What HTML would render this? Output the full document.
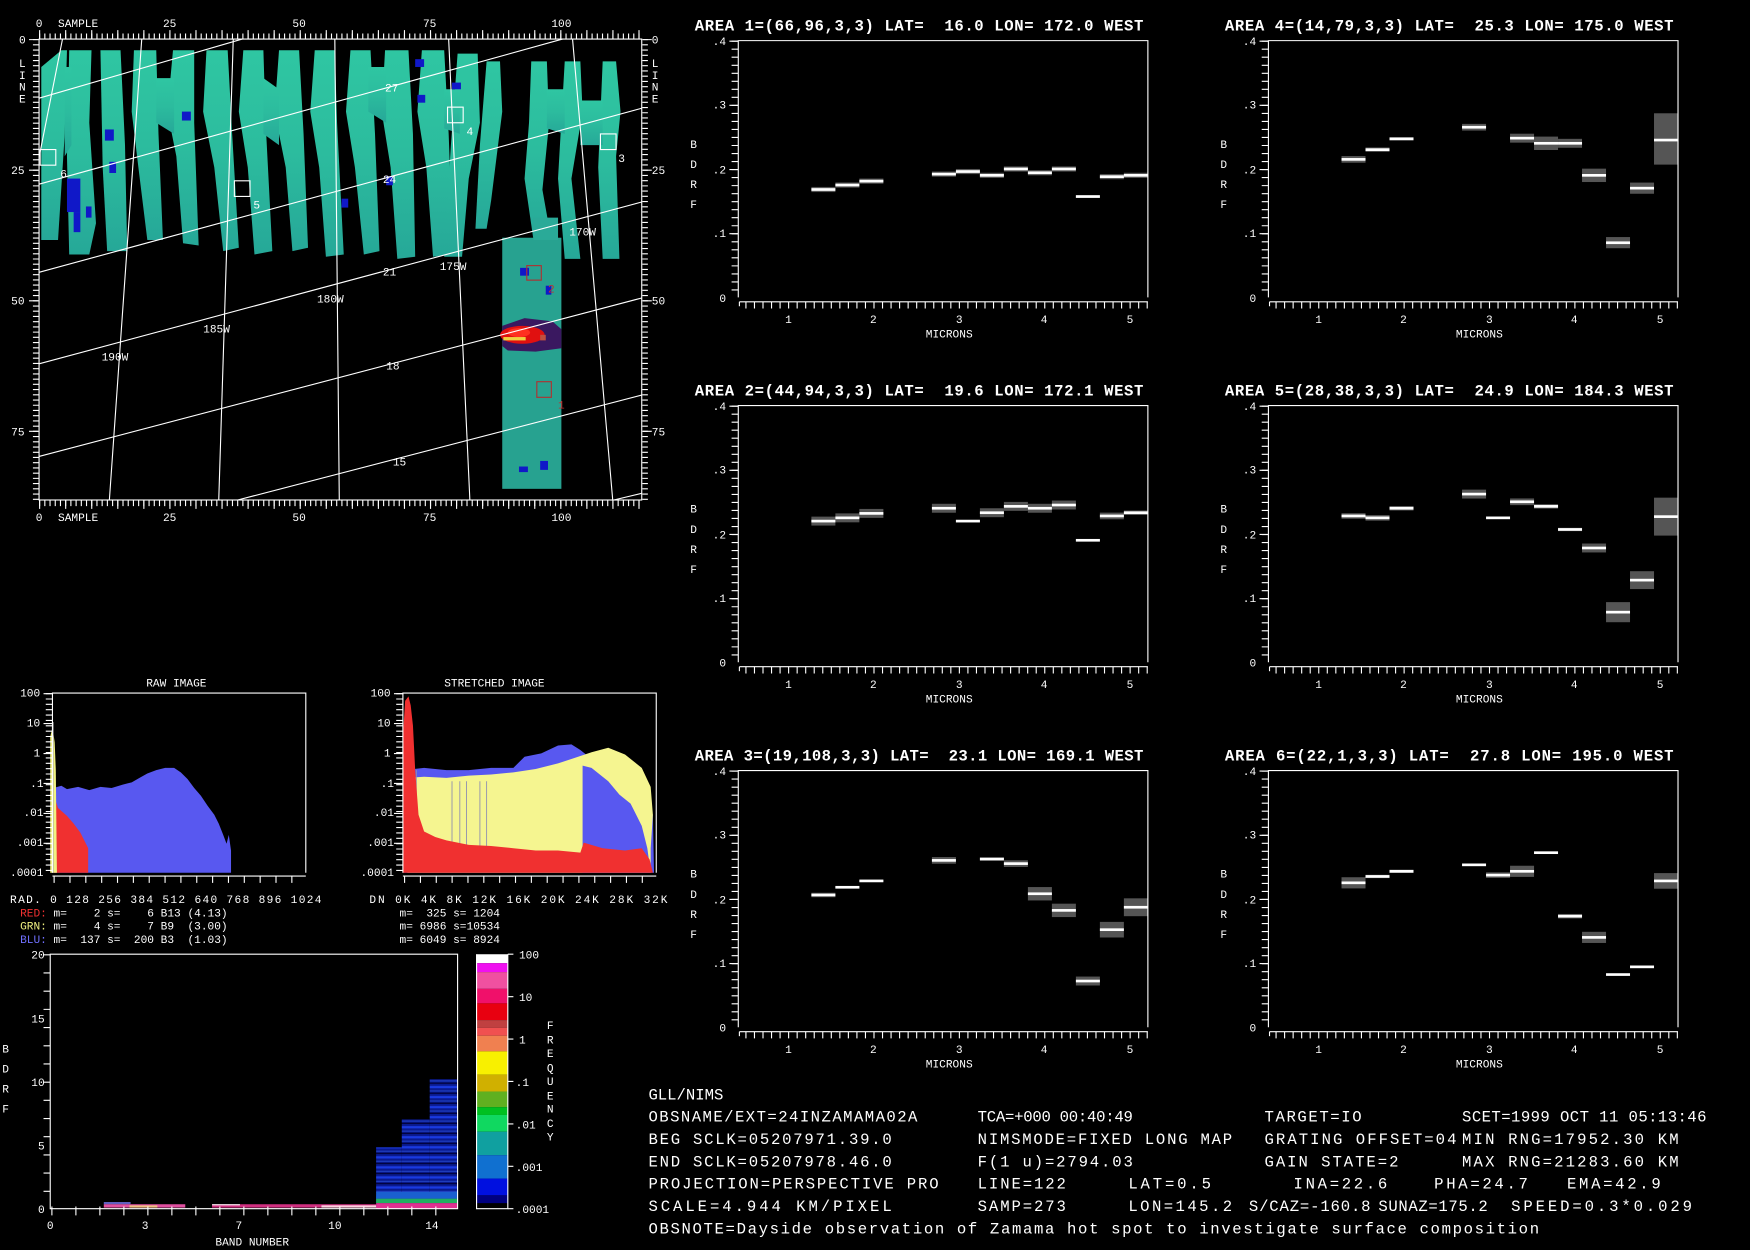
<!DOCTYPE html>
<html><head><meta charset="utf-8"><style>
html,body{margin:0;padding:0;background:#000;overflow:hidden}
svg{display:block}
text{font-family:"Liberation Mono",monospace;fill:#fff}
</style></head><body>
<svg width="1750" height="1250" viewBox="0 0 1568 1120" preserveAspectRatio="none" xmlns="http://www.w3.org/2000/svg">
<rect width="1568" height="1120" fill="#000"/>
<defs>
<linearGradient id="tg" x1="0" y1="0" x2="0" y2="1"><stop offset="0" stop-color="#2fc6a2"/><stop offset="0.5" stop-color="#2cbc9e"/><stop offset="1" stop-color="#26a898"/></linearGradient>
<pattern id="bl" width="20" height="9" patternUnits="userSpaceOnUse"><rect width="20" height="9" fill="#0a1a90"/><rect y="1" width="20" height="2" fill="#1a3ae0"/><rect y="5" width="20" height="1" fill="#2040c0"/><rect y="7" width="20" height="1" fill="#000030"/></pattern>
<g id="lt"><path d="M-3 0V230" stroke="#fff" stroke-width="6" stroke-dasharray="1 6.19"/><path d="M-4 0V230" stroke="#fff" stroke-width="8" stroke-dasharray="1 56.5"/></g>
<g id="frame">
<path d="M0 230V0H367V230" stroke="#fff" fill="none"/>
<use href="#lt"/>
<path d="M1 234H367" stroke="#fff"/>
<path d="M6.35 237H367" stroke="#fff" stroke-width="6" stroke-dasharray="1 6.65"/>
<path d="M1 238V234" stroke="#fff"/>
<g font-size="10">
<text x="-23" y="4">.4</text><text x="-23" y="61">.3</text><text x="-23" y="119">.2</text><text x="-23" y="176">.1</text><text x="-17" y="234">0</text>
<text x="-43" y="96">B</text><text x="-43" y="114">D</text><text x="-43" y="132">R</text><text x="-43" y="150">F</text>
<text x="42" y="253">1</text><text x="118" y="253">2</text><text x="195" y="253">3</text><text x="271" y="253">4</text><text x="348" y="253">5</text>
<text x="168" y="266">MICRONS</text>
</g>
</g>
</defs>

<!-- ============ MAP ============ -->
<g>
<g fill="url(#tg)">
<polygon points="37,60 55,45 60,45 58,120 52,215 37,215"/>
<polygon points="62,45 82,45 80,110 86,200 80,228 62,228 60,140"/>
<polygon points="90,45 108,45 112,130 114,225 96,225 92,150"/>
<polygon points="120,45 140,45 142,120 146,215 132,215 124,150 118,100"/>
<polygon points="155,45 174,45 174,110 178,220 164,218 158,140 150,100"/>
<polygon points="185,45 204,45 208,120 214,222 200,225 192,150 182,100"/>
<polygon points="218,45 236,45 238,110 244,225 228,228 222,150 214,100"/>
<polygon points="250,45 268,45 272,120 276,222 262,225 256,150 246,100"/>
<polygon points="282,45 300,45 302,110 308,228 292,230 286,150 278,100"/>
<polygon points="314,45 332,45 336,120 340,225 326,228 318,150 310,100"/>
<polygon points="345,45 366,45 370,120 372,230 356,232 350,150 342,100"/>
<polygon points="378,45 398,45 402,120 406,228 388,230 382,150 374,100"/>
<polygon points="410,48 428,48 430,110 420,160 414,230 398,230 404,130"/>
<polygon points="436,55 448,55 450,100 440,180 436,205 426,205 430,130"/>
<polygon points="476,55 490,55 492,110 486,170 494,215 478,215 470,160 474,110"/>
<polygon points="506,55 520,55 522,100 512,160 520,232 506,232 500,160"/>
<polygon points="540,55 552,55 556,100 552,140 555,232 540,232 536,150"/>
<polygon points="58,60 64,60 64,130 58,140"/><polygon points="140,70 156,70 156,120 140,110"/>
<polygon points="236,70 250,80 250,130 236,120"/><polygon points="330,60 346,60 346,110 330,100"/>
<polygon points="398,80 412,80 412,120 398,115"/><polygon points="490,80 506,80 506,120 490,115"/>
<polygon points="520,90 540,90 540,130 520,130"/>
</g>
<rect x="450" y="213" width="53" height="225" fill="#27a290"/>
<rect x="478" y="195" width="22" height="20" fill="#2aaa98"/>
<polygon points="450,292 470,285 495,288 503,295 503,312 480,315 455,314 450,310" fill="#3a1860"/>
<ellipse cx="468" cy="300" rx="20" ry="8" fill="#e01010"/>
<ellipse cx="465" cy="298" rx="10" ry="4" fill="#ff3020"/>
<rect x="451" y="302" width="20" height="3" fill="#f0d040"/>
<rect x="484" y="300" width="5" height="5" fill="#c05040"/>
<g fill="#1018c8">
<rect x="94" y="116" width="8" height="10"/><rect x="60" y="160" width="12" height="30"/><rect x="66" y="190" width="6" height="18"/>
<rect x="98" y="145" width="6" height="10"/><rect x="163" y="100" width="8" height="8"/><rect x="372" y="53" width="8" height="7"/>
<rect x="374" y="85" width="7" height="7"/><rect x="405" y="74" width="8" height="6"/><rect x="306" y="178" width="6" height="8"/>
<rect x="346" y="158" width="6" height="8"/><rect x="466" y="240" width="8" height="7"/><rect x="489" y="256" width="5" height="8"/>
<rect x="465" y="418" width="8" height="5"/><rect x="484" y="413" width="7" height="8"/><rect x="77" y="185" width="5" height="10"/>
</g>
<g stroke="#fff" stroke-width="1" fill="none">
<path d="M35 88L217 35M35 165L504 35M35 244L575 97M35 326L575 181M35 409L575 267M213 448L575 354M550 448L575 442"/>
<path d="M56 35L35 141M127 35L98 448M209 35L196 448M300 35L304 448M402 35L421 448M513 35L549 448"/>
<rect x="35" y="35" width="540" height="413"/>
<rect x="401" y="96" width="14" height="14"/><rect x="538" y="120" width="14" height="14"/>
<rect x="36" y="134" width="14" height="14"/><rect x="210" y="162" width="14" height="14"/>
</g>
<g stroke="#b03030" stroke-width="1" fill="none"><rect x="472" y="238" width="13" height="13"/><rect x="481" y="342" width="13" height="14"/></g>
<g font-size="10">
<text x="345" y="82">27</text><text x="343" y="164">24</text><text x="343" y="247">21</text><text x="346" y="331">18</text><text x="352" y="417">15</text>
<text x="510" y="211">170W</text><text x="394" y="242">175W</text><text x="284" y="271">180W</text><text x="182" y="298">185W</text><text x="91" y="323">190W</text>
<text x="418" y="121">4</text><text x="554" y="145">3</text><text x="54" y="159">6</text><text x="227" y="187">5</text>
<text x="491" y="262" style="fill:#c03030">2</text><text x="500" y="366" style="fill:#c03030">1</text>
</g>
<g stroke="#fff" fill="none">
<path d="M35 32.5H575" stroke-width="5" stroke-dasharray="1 3.67"/>
<path d="M35 31H575" stroke-width="8" stroke-dasharray="1 22.35"/>
<path d="M35 451H575" stroke-width="5" stroke-dasharray="1 3.67"/>
<path d="M35 452H575" stroke-width="8" stroke-dasharray="1 22.35"/>
<path d="M32 35V448" stroke-width="5" stroke-dasharray="1 3.68"/>
<path d="M578 35V448" stroke-width="5" stroke-dasharray="1 3.68"/>
<path d="M30 35V448" stroke-width="8" stroke-dasharray="1 116"/>
<path d="M580 35V448" stroke-width="8" stroke-dasharray="1 116"/>
</g>
<g font-size="10">
<text x="32" y="24">0</text><text x="52" y="24">SAMPLE</text><text x="146" y="24">25</text><text x="262" y="24">50</text><text x="379" y="24">75</text><text x="494" y="24">100</text>
<text x="32" y="467">0</text><text x="52" y="467">SAMPLE</text><text x="146" y="467">25</text><text x="262" y="467">50</text><text x="379" y="467">75</text><text x="494" y="467">100</text>
<text x="17" y="39">0</text><text x="10" y="156">25</text><text x="10" y="273">50</text><text x="10" y="390">75</text>
<text x="584" y="39">0</text><text x="584" y="156">25</text><text x="584" y="273">50</text><text x="584" y="390">75</text>
<text x="17" y="60">L</text><text x="17" y="71">I</text><text x="17" y="81">N</text><text x="17" y="92">E</text>
<text x="584" y="60">L</text><text x="584" y="71">I</text><text x="584" y="81">N</text><text x="584" y="92">E</text>
</g>
</g>

<!-- ============ AREA PLOTS ============ -->
<g font-size="10">
<g transform="translate(661.5,36.4)">
<text x="-39" y="-9" font-size="14" font-weight="bold" textLength="402" xml:space="preserve">AREA 1=(66,96,3,3) LAT=  16.0 LON= 172.0 WEST</text>
<g fill="#555"><rect x="65.5" y="131.1" width="21.5" height="4.6"/><rect x="87" y="127.1" width="21.5" height="4.6"/><rect x="108.5" y="123.6" width="21.5" height="4.6"/><rect x="173.5" y="117.3" width="21.5" height="4.6"/><rect x="195" y="115" width="21.5" height="4.6"/><rect x="216.5" y="118.4" width="21.5" height="4.6"/><rect x="238" y="112.7" width="21.5" height="4.6"/><rect x="259.5" y="116.1" width="21.5" height="4.6"/><rect x="281" y="112.7" width="21.5" height="4.6"/><rect x="302.5" y="138.5" width="21.5" height="2.4"/><rect x="324" y="119.6" width="21.5" height="4.6"/><rect x="345.5" y="118.4" width="21.5" height="4.6"/></g>
<g fill="#fff"><rect x="65.5" y="132.2" width="21.5" height="2.4"/><rect x="87" y="128.2" width="21.5" height="2.4"/><rect x="108.5" y="124.7" width="21.5" height="2.4"/><rect x="173.5" y="118.4" width="21.5" height="2.4"/><rect x="195" y="116.1" width="21.5" height="2.4"/><rect x="216.5" y="119.5" width="21.5" height="2.4"/><rect x="238" y="113.8" width="21.5" height="2.4"/><rect x="259.5" y="117.2" width="21.5" height="2.4"/><rect x="281" y="113.8" width="21.5" height="2.4"/><rect x="302.5" y="138.5" width="21.5" height="2.4"/><rect x="324" y="120.7" width="21.5" height="2.4"/><rect x="345.5" y="119.5" width="21.5" height="2.4"/></g>
</g>
<g transform="translate(1136.5,36.4)">
<text x="-39" y="-9" font-size="14" font-weight="bold" textLength="402" xml:space="preserve">AREA 4=(14,79,3,3) LAT=  25.3 LON= 175.0 WEST</text>
<g fill="#555"><rect x="65.5" y="103.4" width="21.5" height="6"/><rect x="87" y="95.7" width="21.5" height="4"/><rect x="108.5" y="86.5" width="21.5" height="3"/><rect x="173.5" y="74.6" width="21.5" height="6"/><rect x="216.5" y="83.4" width="21.5" height="8"/><rect x="238" y="86" width="21.5" height="12"/><rect x="259.5" y="88" width="21.5" height="8"/><rect x="281" y="114.7" width="21.5" height="12"/><rect x="302.5" y="176" width="21.5" height="10"/><rect x="324" y="127.2" width="21.5" height="10"/><rect x="345.5" y="65.1" width="21.5" height="46"/></g>
<g fill="#fff"><rect x="65.5" y="105.2" width="21.5" height="2.4"/><rect x="87" y="96.5" width="21.5" height="2.4"/><rect x="108.5" y="86.8" width="21.5" height="2.4"/><rect x="173.5" y="76.4" width="21.5" height="2.4"/><rect x="216.5" y="86.2" width="21.5" height="2.4"/><rect x="238" y="90.8" width="21.5" height="2.4"/><rect x="259.5" y="90.8" width="21.5" height="2.4"/><rect x="281" y="119.5" width="21.5" height="2.4"/><rect x="302.5" y="179.9" width="21.5" height="2.4"/><rect x="324" y="131" width="21.5" height="2.4"/><rect x="345.5" y="87.9" width="21.5" height="2.4"/></g>
</g>
<g transform="translate(661.5,363.4)">
<text x="-39" y="-9" font-size="14" font-weight="bold" textLength="402" xml:space="preserve">AREA 2=(44,94,3,3) LAT=  19.6 LON= 172.1 WEST</text>
<g fill="#555"><rect x="65.5" y="99.5" width="21.5" height="8"/><rect x="87" y="96.6" width="21.5" height="8"/><rect x="108.5" y="92.6" width="21.5" height="8"/><rect x="173.5" y="88" width="21.5" height="8"/><rect x="195" y="102.5" width="21.5" height="2"/><rect x="216.5" y="92" width="21.5" height="8"/><rect x="238" y="86.3" width="21.5" height="8"/><rect x="259.5" y="88" width="21.5" height="8"/><rect x="281" y="85.1" width="21.5" height="8"/><rect x="302.5" y="119.7" width="21.5" height="2"/><rect x="324" y="95.9" width="21.5" height="6"/><rect x="345.5" y="94" width="21.5" height="4"/></g>
<g fill="#fff"><rect x="65.5" y="102.3" width="21.5" height="2.4"/><rect x="87" y="99.4" width="21.5" height="2.4"/><rect x="108.5" y="95.4" width="21.5" height="2.4"/><rect x="173.5" y="90.8" width="21.5" height="2.4"/><rect x="195" y="102.3" width="21.5" height="2.4"/><rect x="216.5" y="94.8" width="21.5" height="2.4"/><rect x="238" y="89.1" width="21.5" height="2.4"/><rect x="259.5" y="90.8" width="21.5" height="2.4"/><rect x="281" y="87.9" width="21.5" height="2.4"/><rect x="302.5" y="119.5" width="21.5" height="2.4"/><rect x="324" y="97.7" width="21.5" height="2.4"/><rect x="345.5" y="94.8" width="21.5" height="2.4"/></g>
</g>
<g transform="translate(1136.5,363.4)">
<text x="-39" y="-9" font-size="14" font-weight="bold" textLength="402" xml:space="preserve">AREA 5=(28,38,3,3) LAT=  24.9 LON= 184.3 WEST</text>
<g fill="#555"><rect x="65.5" y="96.4" width="21.5" height="5"/><rect x="87" y="98.1" width="21.5" height="5"/><rect x="108.5" y="90" width="21.5" height="4"/><rect x="173.5" y="75.3" width="21.5" height="8"/><rect x="216.5" y="83.2" width="21.5" height="6"/><rect x="238" y="88.3" width="21.5" height="4"/><rect x="259.5" y="109.5" width="21.5" height="3"/><rect x="281" y="123.6" width="21.5" height="8"/><rect x="302.5" y="176.1" width="21.5" height="18"/><rect x="324" y="148.4" width="21.5" height="16"/><rect x="345.5" y="82.5" width="21.5" height="34"/></g>
<g fill="#fff"><rect x="65.5" y="97.7" width="21.5" height="2.4"/><rect x="87" y="99.4" width="21.5" height="2.4"/><rect x="108.5" y="90.8" width="21.5" height="2.4"/><rect x="173.5" y="78.1" width="21.5" height="2.4"/><rect x="195" y="99.4" width="21.5" height="2.4"/><rect x="216.5" y="85" width="21.5" height="2.4"/><rect x="238" y="89.1" width="21.5" height="2.4"/><rect x="259.5" y="109.8" width="21.5" height="2.4"/><rect x="281" y="126.4" width="21.5" height="2.4"/><rect x="302.5" y="183.9" width="21.5" height="2.4"/><rect x="324" y="155.2" width="21.5" height="2.4"/><rect x="345.5" y="98.3" width="21.5" height="2.4"/></g>
</g>
<g transform="translate(661.5,690.4)">
<text x="-39" y="-9" font-size="14" font-weight="bold" textLength="402" xml:space="preserve">AREA 3=(19,108,3,3) LAT=  23.1 LON= 169.1 WEST</text>
<g fill="#555"><rect x="65.5" y="109.5" width="21.5" height="4"/><rect x="87" y="103.6" width="21.5" height="2"/><rect x="108.5" y="97.9" width="21.5" height="2"/><rect x="173.5" y="77.5" width="21.5" height="6"/><rect x="216.5" y="77.8" width="21.5" height="3"/><rect x="238" y="80.4" width="21.5" height="6"/><rect x="259.5" y="104.4" width="21.5" height="12"/><rect x="281" y="119.3" width="21.5" height="12"/><rect x="302.5" y="184.6" width="21.5" height="8"/><rect x="324" y="135.6" width="21.5" height="14"/><rect x="345.5" y="114.5" width="21.5" height="16"/></g>
<g fill="#fff"><rect x="65.5" y="110.3" width="21.5" height="2.4"/><rect x="87" y="103.4" width="21.5" height="2.4"/><rect x="108.5" y="97.7" width="21.5" height="2.4"/><rect x="173.5" y="79.3" width="21.5" height="2.4"/><rect x="216.5" y="78.1" width="21.5" height="2.4"/><rect x="238" y="82.2" width="21.5" height="2.4"/><rect x="259.5" y="109.2" width="21.5" height="2.4"/><rect x="281" y="124.1" width="21.5" height="2.4"/><rect x="302.5" y="187.4" width="21.5" height="2.4"/><rect x="324" y="141.4" width="21.5" height="2.4"/><rect x="345.5" y="121.3" width="21.5" height="2.4"/></g>
</g>
<g transform="translate(1136.5,690.4)">
<text x="-39" y="-9" font-size="14" font-weight="bold" textLength="402" xml:space="preserve">AREA 6=(22,1,3,3) LAT=  27.8 LON= 195.0 WEST</text>
<g fill="#555"><rect x="65.5" y="95.6" width="21.5" height="10"/><rect x="87" y="93.4" width="21.5" height="3"/><rect x="108.5" y="88.8" width="21.5" height="3"/><rect x="195" y="91.2" width="21.5" height="5"/><rect x="216.5" y="85.3" width="21.5" height="10"/><rect x="259.5" y="128.5" width="21.5" height="4"/><rect x="281" y="144.5" width="21.5" height="10"/><rect x="345.5" y="91.9" width="21.5" height="14"/></g>
<g fill="#fff"><rect x="65.5" y="99.4" width="21.5" height="2.4"/><rect x="87" y="93.7" width="21.5" height="2.4"/><rect x="108.5" y="89.1" width="21.5" height="2.4"/><rect x="173.5" y="83.3" width="21.5" height="2.4"/><rect x="195" y="92.5" width="21.5" height="2.4"/><rect x="216.5" y="89.1" width="21.5" height="2.4"/><rect x="238" y="72.4" width="21.5" height="2.4"/><rect x="259.5" y="129.3" width="21.5" height="2.4"/><rect x="281" y="148.3" width="21.5" height="2.4"/><rect x="302.5" y="181.6" width="21.5" height="2.4"/><rect x="324" y="174.7" width="21.5" height="2.4"/><rect x="345.5" y="97.7" width="21.5" height="2.4"/></g>
</g>
</g>
<use href="#frame" transform="translate(661.5,36.4)"/>
<use href="#frame" transform="translate(1136.5,36.4)"/>
<use href="#frame" transform="translate(661.5,363.4)"/>
<use href="#frame" transform="translate(1136.5,363.4)"/>
<use href="#frame" transform="translate(661.5,690.4)"/>
<use href="#frame" transform="translate(1136.5,690.4)"/>

<!-- ============ HISTOGRAMS ============ -->
<g font-size="10">
<text x="131" y="615">RAW IMAGE</text>
<text x="398" y="615">STRETCHED IMAGE</text>
<polygon fill="#5858f0" points="48,782 48,706 55,704 60,707 70,705 80,708 90,705 100,706 110,703 118,701 125,697 132,693 140,690 148,688 156,688 162,692 168,698 174,706 180,713 186,722 192,730 196,738 200,748 203,756 205,748 207,762 207,782"/>
<polygon fill="#f03030" points="48,782 48,712 52,724 60,731 66,738 72,746 76,754 79,760 79,782"/>
<polygon fill="#f0f080" points="45,782 45,660 47,652 49,665 50,690 51,782"/>
<rect x="47" y="647" width="1" height="135" fill="#aaa"/>
<polygon fill="#5858f0" points="362,782 362,690 380,688 400,690 420,690 440,688 460,688 470,678 485,675 500,668 512,667 520,672 530,680 545,690 560,700 575,715 585,730 586,782"/>
<polygon fill="#f5f590" points="365,782 365,697 380,696 400,697 420,695 440,694 460,692 480,689 500,684 515,679 530,674 545,670 560,676 575,688 583,705 585,730 583,760 583,782"/>
<polygon fill="#5858f0" points="522,782 522,686 530,688 545,700 555,712 565,720 575,740 580,760 583,782"/>
<g stroke="#9090b0" stroke-width="0.8"><path d="M366 690V782M370 690V782M373 690V782M405 700V760M412 700V760M418 700V760M430 700V770M436 700V770"/></g>
<polygon fill="#f03030" points="361,782 361,660 363,628 366,624 368,632 370,650 372,690 375,730 380,745 390,750 400,753 420,757 440,758 460,760 480,762 500,762 520,764 523,755 540,760 560,762 575,760 582,770 585,782"/>
<g stroke="#fff" fill="none">
<path d="M47 782V621H274V782"/><path d="M361 782V621H588V782"/>
<path d="M47 785H274M361 785H588"/>
<path d="M48 788H274" stroke-width="6" stroke-dasharray="1 13.2"/>
<path d="M362 788H588" stroke-width="6" stroke-dasharray="1 13.2"/>
<path d="M44 621V782" stroke-width="6" stroke-dasharray="1 3.8"/>
<path d="M358 621V782" stroke-width="6" stroke-dasharray="1 3.8"/>
<path d="M43 621V782" stroke-width="8" stroke-dasharray="1 25.83"/>
<path d="M357 621V782" stroke-width="8" stroke-dasharray="1 25.83"/>
</g>
<g font-size="10">
<text x="18" y="624">100</text><text x="24" y="651">10</text><text x="30" y="678">1</text><text x="27" y="705">.1</text><text x="21" y="731">.01</text><text x="15" y="758">.001</text><text x="9" y="785">.0001</text>
<text x="332" y="624">100</text><text x="338" y="651">10</text><text x="344" y="678">1</text><text x="341" y="705">.1</text><text x="335" y="731">.01</text><text x="329" y="758">.001</text><text x="323" y="785">.0001</text>
<text x="9" y="809" textLength="279">RAD. 0  128 256 384 512 640 768 896 1024</text>
<text x="331" y="809" textLength="267">DN  0K  4K  8K  12K 16K 20K 24K 28K 32K</text>
<text x="18" y="821" xml:space="preserve"><tspan style="fill:#f03030">RED:</tspan> m=    2 s=    6 B13 (4.13)</text>
<text x="18" y="833" xml:space="preserve"><tspan style="fill:#f0f080">GRN:</tspan> m=    4 s=    7 B9  (3.00)</text>
<text x="18" y="845" xml:space="preserve"><tspan style="fill:#7070ff">BLU:</tspan> m=  137 s=  200 B3  (1.03)</text>
<text x="358" y="821" xml:space="preserve">m=  325 s= 1204</text>
<text x="358" y="833" xml:space="preserve">m= 6986 s=10534</text>
<text x="358" y="845" xml:space="preserve">m= 6049 s= 8924</text>
</g>
</g>

<!-- ============ BDRF BAND PLOT ============ -->
<g>
<rect x="337" y="1028" width="23" height="55" fill="url(#bl)"/>
<rect x="360" y="1003" width="25" height="80" fill="url(#bl)"/>
<rect x="385" y="967" width="25" height="116" fill="url(#bl)"/>
<rect x="337" y="1068" width="73" height="6" fill="#1a60d0"/>
<rect x="337" y="1074" width="73" height="4" fill="#20b060"/>
<rect x="337" y="1078" width="73" height="5" fill="#e03090"/>
<rect x="93" y="1077" width="24" height="2" fill="#6060c0"/>
<rect x="93" y="1079" width="73" height="3" fill="#e050a0"/>
<rect x="116" y="1080" width="25" height="2" fill="#f0c080"/>
<rect x="190" y="1079" width="147" height="3" fill="#d03080"/>
<rect x="190" y="1079" width="25" height="1" fill="#fff"/>
<rect x="288" y="1080" width="49" height="2" fill="#ffd0e0"/>
<g stroke="#fff" fill="none">
<path d="M45 855H410V1083H45Z"/>
<path d="M42 855V1083" stroke-width="6" stroke-dasharray="1 15.3"/>
<path d="M46 1085H410" stroke-width="8" stroke-dasharray="1 20.5"/>
</g>
<rect x="427" y="855" width="28" height="8" fill="#ffffff"/>
<rect x="427" y="863" width="28" height="8" fill="#f010f0"/>
<rect x="427" y="871" width="28" height="15" fill="#f050a0"/>
<rect x="427" y="886" width="28" height="13" fill="#f0106a"/>
<rect x="427" y="899" width="28" height="15" fill="#e80010"/>
<rect x="427" y="914" width="28" height="7" fill="#c04040"/>
<rect x="427" y="921" width="28" height="7" fill="#f05050"/>
<rect x="427" y="928" width="28" height="14" fill="#f08050"/>
<rect x="427" y="942" width="28" height="21" fill="#f8f000"/>
<rect x="427" y="963" width="28" height="15" fill="#d0b000"/>
<rect x="427" y="978" width="28" height="14" fill="#60b020"/>
<rect x="427" y="992" width="28" height="7" fill="#00c020"/>
<rect x="427" y="999" width="28" height="15" fill="#10d860"/>
<rect x="427" y="1014" width="28" height="21" fill="#10a0a0"/>
<rect x="427" y="1035" width="28" height="21" fill="#1070d0"/>
<rect x="427" y="1056" width="28" height="15" fill="#0010e0"/>
<rect x="427" y="1071" width="28" height="7" fill="#000080"/>
<path d="M427 855V1083H455V855" stroke="#fff" fill="none"/>
<path d="M455 855h5M455 893h5M455 931h5M455 969h5M455 1007h5M455 1045h5M455 1083h5" stroke="#fff"/>
<g font-size="10">
<text x="28" y="859">20</text><text x="28" y="916">15</text><text x="28" y="973">10</text><text x="34" y="1030">5</text><text x="34" y="1087">0</text>
<text x="2" y="943">B</text><text x="2" y="961">D</text><text x="2" y="979">R</text><text x="2" y="997">F</text>
<text x="42" y="1101">0</text><text x="127" y="1101">3</text><text x="211" y="1101">7</text><text x="294" y="1101">10</text><text x="381" y="1101">14</text>
<text x="193" y="1116">BAND NUMBER</text>
<text x="465" y="859">100</text><text x="465" y="897">10</text><text x="465" y="935">1</text><text x="462" y="973">.1</text><text x="462" y="1011">.01</text><text x="462" y="1049">.001</text><text x="462" y="1087">.0001</text>
<text x="490" y="922">F</text><text x="490" y="935">R</text><text x="490" y="947">E</text><text x="490" y="960">Q</text><text x="490" y="972">U</text><text x="490" y="985">E</text><text x="490" y="997">N</text><text x="490" y="1010">C</text><text x="490" y="1022">Y</text>
</g>
</g>

<!-- ============ INFO TEXT ============ -->
<g font-size="14" xml:space="preserve">
<text x="581" y="985">GLL/NIMS</text>
<text x="581" y="1005" textLength="241">OBSNAME/EXT=24INZAMAMA02A</text>
<text x="876" y="1005" textLength="139">TCA=+000 00:40:49</text>
<text x="1133" y="1005" textLength="87">TARGET=IO</text>
<text x="1310" y="1005" textLength="219">SCET=1999 OCT 11 05:13:46</text>
<text x="581" y="1025" textLength="218">BEG SCLK=05207971.39.0</text>
<text x="876" y="1025" textLength="228">NIMSMODE=FIXED LONG MAP</text>
<text x="1133" y="1025" textLength="172">GRATING OFFSET=04</text>
<text x="1310" y="1025" textLength="194">MIN RNG=17952.30 KM</text>
<text x="581" y="1045" textLength="218">END SCLK=05207978.46.0</text>
<text x="876" y="1045" textLength="139">F(1 u)=2794.03</text>
<text x="1133" y="1045" textLength="120">GAIN STATE=2</text>
<text x="1310" y="1045" textLength="194">MAX RNG=21283.60 KM</text>
<text x="581" y="1065" textLength="260">PROJECTION=PERSPECTIVE PRO</text>
<text x="876" y="1065" textLength="79">LINE=122</text>
<text x="1011" y="1065" textLength="74">LAT=0.5</text>
<text x="1159" y="1065" textLength="84">INA=22.6</text>
<text x="1285" y="1065" textLength="84">PHA=24.7</text>
<text x="1404" y="1065" textLength="84">EMA=42.9</text>
<text x="581" y="1085" textLength="218">SCALE=4.944   KM/PIXEL</text>
<text x="876" y="1085" textLength="79">SAMP=273</text>
<text x="1011" y="1085" textLength="93">LON=145.2</text>
<text x="1119" y="1085" textLength="109">S/CAZ=-160.8</text>
<text x="1235" y="1085" textLength="98">SUNAZ=175.2</text>
<text x="1354" y="1085" textLength="162">SPEED=0.3*0.029</text>
<text x="581" y="1105" textLength="798">OBSNOTE=Dayside observation of Zamama hot spot to investigate surface composition</text>
</g>
</svg>
</body></html>
